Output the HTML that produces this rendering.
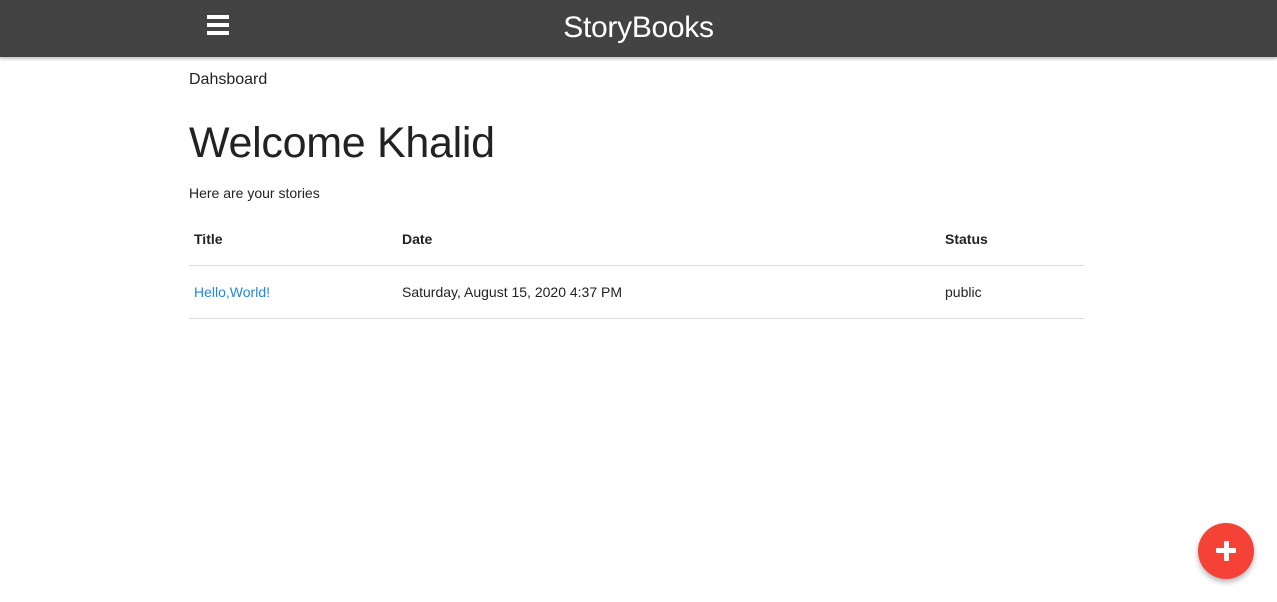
<!DOCTYPE html>
<html><head><meta charset="utf-8"><style>
*{margin:0;padding:0;box-sizing:border-box}
body{width:1277px;height:602px;overflow:hidden;background:#fff;font-family:"Liberation Sans",sans-serif;color:#222;position:relative}
.nav{height:57px;background:#434343;box-shadow:0 2px 3px rgba(0,0,0,.25);position:relative}
.brand{position:absolute;left:0;right:0;top:11px;text-align:center;color:#fff;font-size:30px;letter-spacing:-0.3px}
.ham{position:absolute;left:207px;top:15px;width:22px}
.ham div{height:4px;background:#fff;margin-bottom:4px}
.crumb{position:absolute;left:189px;top:71px;font-size:16px}
h1{position:absolute;left:189px;top:119px;font-size:43px;font-weight:400;letter-spacing:-0.3px}
.sub{position:absolute;left:189px;top:185px;font-size:14px}
table{position:absolute;left:189px;top:213px;width:895px;border-collapse:collapse;font-size:14px}
td,th{text-align:left;padding:0 5px;height:53px;border-bottom:1px solid #ddd}
th{font-weight:700;height:52px}
a{color:#1e88e5;text-decoration:none}
.fab{position:absolute;left:1198px;top:523px;width:56px;height:56px;border-radius:50%;background:#f44336;box-shadow:0 3px 6px rgba(0,0,0,.3)}
.fab:before{content:"";position:absolute;left:18px;top:25px;width:20px;height:5px;background:#fff;border-radius:1px}
.fab:after{content:"";position:absolute;left:25.5px;top:18px;width:5px;height:20px;background:#fff;border-radius:1px}
</style></head><body>
<div class="nav"><div class="ham"><div></div><div></div><div></div></div><div class="brand">StoryBooks</div></div>
<div class="crumb">Dahsboard</div>
<h1>Welcome Khalid</h1>
<div class="sub">Here are your stories</div>
<table>
<tr><th style="width:208px">Title</th><th style="width:543px">Date</th><th>Status</th></tr>
<tr><td><a>Hello,World!</a></td><td>Saturday, August 15, 2020 4:37 PM</td><td>public</td></tr>
</table>
<div class="fab"></div>
</body></html>
